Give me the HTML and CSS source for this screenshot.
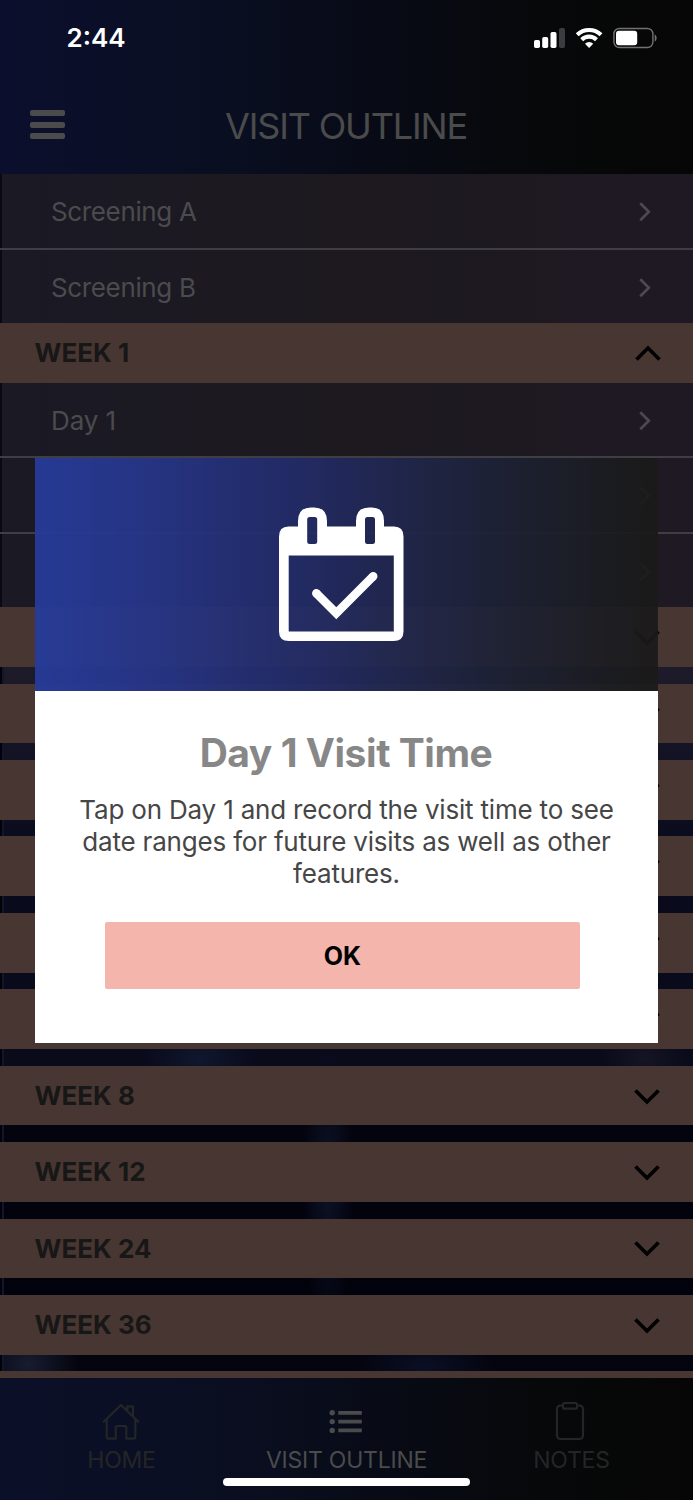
FILE: index.html
```
<!DOCTYPE html>
<html lang="en">
<head>
<meta charset="utf-8">
<title>Visit Outline</title>
<link rel="stylesheet" href="styles.css">
</head>
<body>
<svg class="defs" aria-hidden="true">
  <symbol id="right" viewBox="0 0 12 20"><path d="M1.3 1.3 9.8 9.8 1.3 18.3" fill="none" stroke="currentColor" stroke-width="2.7"/></symbol>
  <symbol id="down" viewBox="0 0 26 16"><path d="M1.5 1.5 13 13 24.500 1.500" fill="none" stroke="currentColor" stroke-width="3.7"/></symbol>
</svg>
<div class="app">
  <header class="top">
    <div class="status">
      <span class="time t">2:44</span>
      <svg class="status-icons" width="124" height="22" viewBox="0 0 124 22">
        <g fill="#fff"><rect x="0" y="13" width="6" height="8" rx="1.7"/><rect x="8.200" y="10" width="6" height="11" rx="1.700"/><rect x="16.500" y="5" width="6" height="16" rx="1.700"/></g>
        <rect x="25" y="1" width="6" height="20" rx="1.700" fill="#3c3c40"/>
        <g fill="none" stroke="#fff" stroke-width="4.100"><path d="M43.200 7.800a17 17 0 0 1 23.800 0"/><path d="M47.700 12.700a10.500 10.500 0 0 1 14.800 0"/></g>
        <path d="M55.100 20.900 51 16.700a6 6 0 0 1 8.200 0z" fill="#fff"/>
        <rect x="79.900" y="1.500" width="39" height="19" rx="5.500" fill="none" stroke="#717172" stroke-width="1.400"/>
        <rect x="82" y="3.700" width="21.200" height="14.600" rx="3" fill="#fff"/>
        <path d="M120.700 7.500c2.600 1.200 2.600 5.800 0 7z" fill="#717172"/>
      </svg>
    </div>
    <div class="titlebar">
      <span class="burger"><i></i><i></i><i></i></span>
      <h1 class="title t">VISIT OUTLINE</h1>
    </div>
  </header>
  <main class="list">
    <div class="row"><span class="t sa">Screening A</span><svg class="r"><use href="#right"/></svg></div>
    <div class="row"><span class="t sa">Screening B</span><svg class="r"><use href="#right"/></svg></div>
    <div class="week open"><span class="t">WEEK 1</span><svg class="d up"><use href="#down"/></svg></div>
    <div class="row"><span class="t day">Day 1</span><svg class="r"><use href="#right"/></svg></div>
    <div class="row"><svg class="r"><use href="#right"/></svg></div>
    <div class="row"><svg class="r"><use href="#right"/></svg></div>
    <div class="week"><svg class="d"><use href="#down"/></svg></div>
    <div class="week"><svg class="d"><use href="#down"/></svg></div>
    <div class="week"><svg class="d"><use href="#down"/></svg></div>
    <div class="week"><svg class="d"><use href="#down"/></svg></div>
    <div class="week"><svg class="d"><use href="#down"/></svg></div>
    <div class="week"><svg class="d"><use href="#down"/></svg></div>
    <div class="week"><span class="t">WEEK 8</span><svg class="d"><use href="#down"/></svg></div>
    <div class="week"><span class="t">WEEK 12</span><svg class="d"><use href="#down"/></svg></div>
    <div class="week"><span class="t">WEEK 24</span><svg class="d"><use href="#down"/></svg></div>
    <div class="week"><span class="t">WEEK 36</span><svg class="d"><use href="#down"/></svg></div>
    <div class="week"></div>
  </main>
  <nav class="tabs">
    <div class="tab home">
      <svg width="38" height="38" viewBox="0 0 38 38" fill="none" stroke="currentColor" stroke-width="2.200" stroke-linejoin="round" stroke-linecap="round"><path d="M1.700 18.700 19 2l17.300 16.700M4.700 16.500V34q0 1.700 1.700 1.700h7.300V24.500q0-1.500 1.500-1.500h7.600q1.500 0 1.500 1.500v11.200h7.300q1.700 0 1.700-1.700V16.500M25.300 7.500V3.300H31v9.500"/></svg>
      <span class="t">HOME</span>
    </div>
    <div class="tab outline">
      <svg width="34" height="38" viewBox="0 0 34 38" fill="currentColor"><circle cx="3.200" cy="9.800" r="2.700"/><circle cx="3.200" cy="18.600" r="2.700"/><circle cx="3.200" cy="27.400" r="2.700"/><path d="M9.300 8h23.500v3.700H9.300zM9.300 16.800h23.500v3.700H9.300zM9.300 25.600h23.500v3.700H9.300z"/></svg>
      <span class="t">VISIT OUTLINE</span>
    </div>
    <div class="tab notes">
      <svg width="30" height="40" viewBox="0 0 30 40" fill="none" stroke="currentColor" stroke-width="2.200"><path d="M8 4.500H6Q2 4.500 2 8.500V34q0 4 4 4h18q4 0 4-4V8.500q0-4-4-4h-2"/><rect x="8" y="2" width="14" height="5.700" rx="1.500"/></svg>
      <span class="t">NOTES</span>
    </div>
  </nav>
  <div class="home-indicator"></div>
  <section class="modal" role="dialog">
    <div class="hero">
      <svg width="125" height="136" viewBox="0 0 125 136">
        <path fill="#fff" fill-rule="evenodd" d="M9.500 19.500H19V14Q19 .500 32 .500h3Q48 .500 48 14v5.500H77V14Q77 .500 90 .500h3Q105 .500 105 14v5.500H115q9.500 0 9.500 10V124.500q0 9.500-10 9.500H10Q0 134 0 124.500V29.500Q0 19.500 9.500 19.500zM9.700 48.500v76H114.800V48.500zM30.700 10q-2.500 0-2.500 2.500V34.500q0 2.500 2.500 2.500h5q2.500 0 2.500-2.500V12.500q0-2.500-2.500-2.500zM88.500 10q-2.500 0-2.500 2.500V34.500q0 2.500 2.500 2.500h5q2.500 0 2.500-2.500V12.500q0-2.500-2.500-2.500z"/>
        <path d="M37.300 86.200 57.300 106.200 94.200 69.300" fill="none" stroke="#fff" stroke-width="8.500"/>
        <path d="M37.300 86.200l.1.100M94.200 69.300l-.1.100" fill="none" stroke="#fff" stroke-width="8.500" stroke-linecap="round"/>
      </svg>
    </div>
    <div class="content">
      <h2 class="heading t">Day 1 Visit Time</h2>
      <p class="copy"><span class="t">Tap on Day 1 and record the visit time to see</span><br><span class="t">date ranges for future visits as well as other</span><br><span class="t l3">features.</span></p>
      <button class="ok"><span class="t">OK</span></button>
    </div>
  </section>
</div>
</body>
</html>
```
FILE: styles.css
```
* { box-sizing: border-box; }
body { margin: 0; font-family: Inter, "Liberation Sans", sans-serif; }
.defs { display: none; }
.t { white-space: nowrap; }
.app {
  position: relative; display: flex; flex-direction: column;
  width: 693px; height: 1500px; overflow: hidden; background: #03030f;
}
.top {
  height: 174px; flex: none;
  background: linear-gradient(90deg, #0b0f2d 0%, #090e20 35%, #080b17 52%, #070809 80%, #060606 100%);
}
.status { height: 74px; padding: 1px 35px 0 66.500px; display: flex; align-items: center; justify-content: space-between; }
.time { color: #fff; font-size: 26px; font-weight: 600; }
.status-icons { display: block; }
.titlebar { height: 100px; display: flex; align-items: center; justify-content: center; position: relative; padding-top: 3px; }
.burger { position: absolute; left: 30px; top: 36px; display: grid; gap: 5.500px; }
.burger i { width: 35px; height: 6px; border-radius: 2px; background: #4c4b4b; }
.title { margin: 0 0 0 -1px; color: #4b4b4c; font-size: 36px; font-weight: 400; letter-spacing: -1.160px; }
.list {
  flex: none; height: 1204px; overflow: hidden; color: #4b4b4e;
  background:
    linear-gradient(90deg, #020207 0 2px, #11152e 2px 4px, transparent 4px),
    radial-gradient(ellipse 60px 30px at 200px 885px, #10172e, transparent),
    radial-gradient(ellipse 50px 40px at 28px 1190px, #171c30, transparent),
    radial-gradient(ellipse 26px 150px at 328px 1010px, #0c1226, transparent),
    radial-gradient(ellipse 70px 30px at 425px 1192px, #0a0f24, transparent),
    radial-gradient(ellipse 45px 30px at 645px 885px, #151524, transparent),
    linear-gradient(180deg, #1d1b29 500px, #131325 580px, #090a1b 680px, #090a1a 890px, #04040f 940px, #02020c 1100px, #04050f);
}
.row {
  height: 75.600px; display: flex; align-items: center; padding: 2px 42px 0 51px;
  border-bottom: 2px solid #3f3e42; font-size: 26px;
  background: linear-gradient(90deg, #09090f 0 2px, transparent 2px), linear-gradient(90deg, #1a1924, #1d191f 50%, #1e1923);
}
.row:nth-child(2), .row:nth-child(6) { height: 73.600px; border-bottom: 0; }
.row:nth-child(4), .row:nth-child(5) { height: 75.400px; }
.row .t { position: relative; top: -.2px; }
.sa { letter-spacing: -.36px; }
.day { letter-spacing: -.1px; }
.r { width: 12px; height: 20px; margin: 1px 0 0 auto; }
.week {
  height: 59.700px; margin-bottom: 16.720px; padding: 0 33px 0 34.500px;
  display: flex; align-items: center; background: #483632;
  color: #171717; font-size: 26px; font-weight: 700;
}
.week.open { margin-bottom: 0; padding-bottom: 1px; }
.d { width: 26px; height: 16px; margin: 2px 0 0 auto; color: #000; }
.up { transform: rotate(180deg); margin: 0 -1px 0 auto; }
.tabs {
  height: 122px; flex: none;
  background: linear-gradient(90deg, #0b1029 0%, #0a0e20 35%, #080b16 55%, #070809 80%, #060606 100%);
  display: grid; grid-template-columns: 243px 207px 243px; padding-top: 24px;
}
.tab { display: flex; flex-direction: column; align-items: center; font-size: 23px; font-weight: 400; letter-spacing: -.230px; color: #242526; }
.tab svg { display: block; height: 40px; margin-right: 2px; }
.notes svg { margin: -1px 3px 1px 0; }
.tab .t { line-height: 28px; margin-top: 4px; }
.outline { color: #4a4b4d; }
.home-indicator { position: absolute; left: 223px; top: 1478px; width: 247px; height: 8px; border-radius: 4px; background: #fff; }
.modal { position: absolute; left: 35px; top: 458px; width: 623px; height: 585px; display: flex; flex-direction: column; }
.hero {
  height: 233px; padding: 49px 0 0 244px; flex: none;
  background: linear-gradient(90deg, rgba(38,59,153,.96) 0%, rgba(38,53,136,.94) 18%, rgba(34,43,102,.92) 44%, rgba(31,37,70,.92) 63%, rgba(28,32,48,.92) 78%, rgba(26,26,26,.92) 98%);
}
.hero svg { display: block; }
.content { flex: 1; background: #fff; text-align: center; padding-top: 37px; }
.heading { margin: 0 0 0 -1px; height: 50px; line-height: 50px; color: #878787; font-size: 39px; font-weight: 700; letter-spacing: -.450px; }
.copy { margin: 16px 0 0; line-height: 32px; font-size: 26px; color: #464646; letter-spacing: -.190px; }
.ok {
  display: flex; align-items: center; justify-content: center; margin: 32px 0 0 70px; padding: 0;
  width: 474.500px; height: 67px; border: 0; border-radius: 2px; background: #f3b5ac;
  color: #000; font: 700 25px Inter, sans-serif;
}
```
